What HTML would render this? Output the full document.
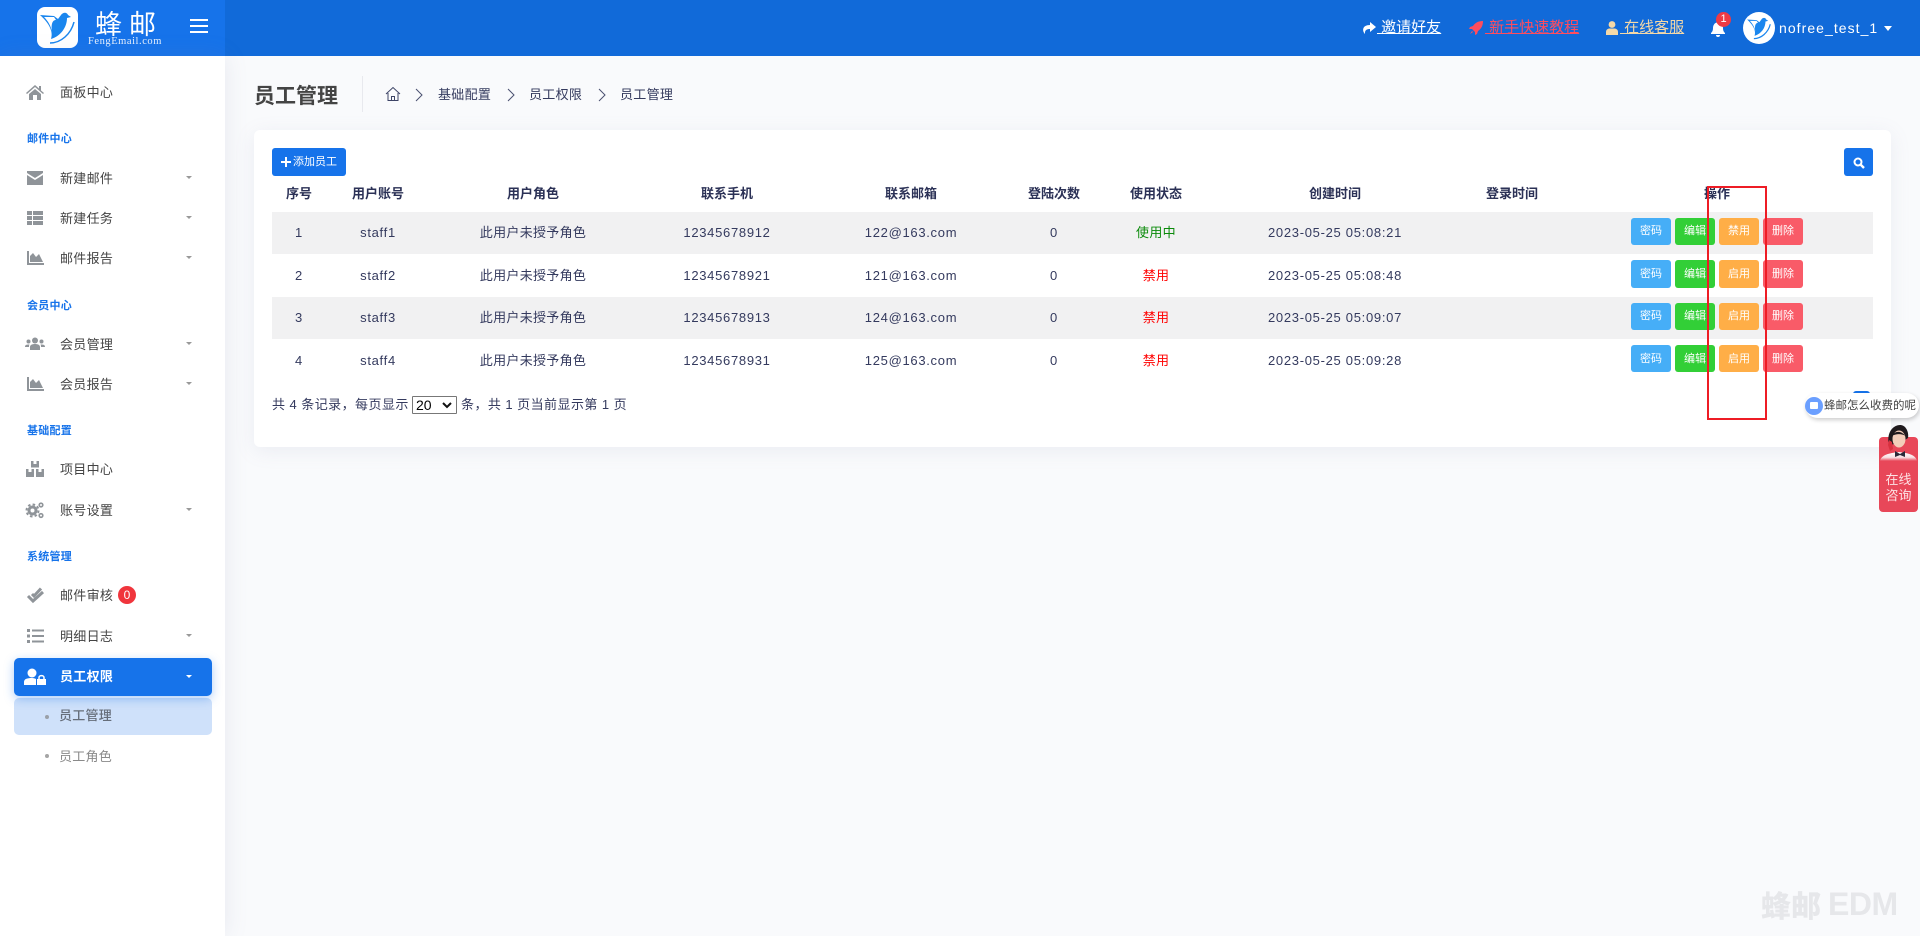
<!DOCTYPE html>
<html lang="zh-CN">
<head>
<meta charset="utf-8">
<title>员工管理</title>
<style>
*{box-sizing:border-box}
html,body{margin:0;padding:0;width:1920px;height:936px;overflow:hidden;background:#f9fafc;font-family:"Liberation Sans","Noto Sans CJK SC",sans-serif;color:#343a5e;font-size:13px}
.a{position:absolute;white-space:nowrap}
#hd{left:0;top:0;width:1920px;height:56px;background:#116ad9}
#hl{left:0;top:0;width:225px;height:56px;background:#1673ea}
#sb{left:0;top:56px;width:225px;height:880px;background:#fff;box-shadow:0 0 22px rgba(120,130,160,.14)}
.it{left:60px;font-size:13px;color:#444;line-height:20px;height:20px;letter-spacing:.3px}
.sec{left:27px;font-size:11px;font-weight:700;color:#1673ea;line-height:16px;letter-spacing:.25px}
.ic{left:25px;width:20px;height:20px;fill:#8f9499}
.car{left:186px;width:0;height:0;border-left:3.5px solid transparent;border-right:3.5px solid transparent;border-top:3.5px solid #999}
#card{left:254px;top:130px;width:1637px;height:317px;background:#fff;border-radius:6px;box-shadow:0 4px 20px rgba(130,140,170,.12)}
.row{left:272px;width:1601px;line-height:42px;font-size:13px}
.row.g{background:#f1f1f2}
.c{position:absolute;top:0;transform:translateX(-50%);white-space:nowrap;letter-spacing:.7px}
.z{letter-spacing:.3px}
.th{top:184px;line-height:20px;font-weight:700;font-size:13px;color:#2b3156;transform:translateX(-50%)}
.b{position:absolute;top:6px;width:40px;height:27px;line-height:27px;text-align:center;color:#fff;font-size:11px;border-radius:3px}
.t .b{line-height:29px}
.b1{left:1359px;background:#46aef7}.b2{left:1403px;background:#32cf37}.b3{left:1447px;background:#ffae47}.b4{left:1491px;background:#f95b68}
.tl{color:#fff;text-decoration:underline;font-size:15px;line-height:20px;top:18px;white-space:pre}
</style>
</head>
<body>
<div class="a" id="hd"></div>
<div class="a" id="hl"></div>

<!-- logo -->
<div class="a" style="left:37px;top:7px;width:41px;height:41px;background:#fff;border-radius:8px"></div>
<svg class="a" style="left:37px;top:7px" width="41" height="41" viewBox="0 0 41 41">
<path fill="#1a86ee" d="M3 8 L17 9 L21 12 L24 8 C26 5 30 5 31 8 L34 10 L30 11 C30 20 24 29 14 32 C16 26 14 18 3 8Z"/>
<path fill="#fff" d="M7 10 H17 L19 13 C15 13 14 18 15 25 C14 19 11 14 7 10Z"/>
<path fill="none" stroke="#1a86ee" stroke-width="1.500" d="M37 15 C34 27 24 36 13 36"/>
</svg>
<div class="a" style="left:95px;top:6px;font-size:27px;line-height:34px;color:#fff;letter-spacing:7px;font-family:'Noto Sans CJK SC',sans-serif;font-weight:400">蜂邮</div>
<div class="a" style="left:88px;top:35px;font-size:10.5px;line-height:14px;color:#e8f1fd;font-family:'Liberation Serif',serif;letter-spacing:.55px">FengEmail.com</div>
<div class="a" style="left:190px;top:19px;width:18px;height:2px;background:#fff"></div>
<div class="a" style="left:190px;top:25px;width:18px;height:2px;background:#fff"></div>
<div class="a" style="left:190px;top:31px;width:18px;height:2px;background:#fff"></div>

<!-- top right -->
<svg class="a" style="left:1362px;top:21px" width="14" height="14" viewBox="0 0 14 14"><path fill="#fff" d="M8 1 L14 6 L8 11 V8 C5 8 2.500 9 3 13 C0 10 0 4 8 4Z"/></svg>
<div class="a tl" style="left:1377px"> 邀请好友</div>
<svg class="a" style="left:1469px;top:20px" width="15" height="15" viewBox="0 0 15 15"><path fill="#ff4d5e" d="M14 1 C9 1 6 3 4 6 L1 7 L0 9 L3 9 L6 12 L6 15 L8 14 L9 11 C12 9 14 6 14 1Z"/><path fill="#ff4d5e" d="M3 11 L4 12 L1 14Z"/></svg>
<div class="a tl" style="left:1485px;color:#ff4d5e"> 新手快速教程</div>
<svg class="a" style="left:1606px;top:21px" width="12" height="14" viewBox="0 0 12 14"><circle cx="6" cy="3.500" r="3.400" fill="#f5d9a8"/><path fill="#f5d9a8" d="M0 14 V11 C0 8.500 2 7.500 3.500 7.500 H8.500 C10 7.500 12 8.500 12 11 V14Z"/></svg>
<div class="a tl" style="left:1620px;color:#f5d9a8"> 在线客服</div>
<svg class="a" style="left:1711px;top:21px" width="14" height="16" viewBox="0 0 14 16"><path fill="#fff" d="M7 0 C8 0 8 1 8 1.500 C11 2 12 5 12 7 C12 10 13 11 14 12 V13 H0 V12 C1 11 2 10 2 7 C2 5 3 2 6 1.500 C6 1 6 0 7 0Z M5 14 H9 C9 15.500 8 16 7 16 C6 16 5 15.500 5 14Z"/></svg>
<div class="a" style="left:1716px;top:12px;width:15px;height:15px;border-radius:50%;background:#ee3a45;color:#fff;font-size:11px;line-height:15px;text-align:center">1</div>
<div class="a" style="left:1743px;top:12px;width:32px;height:32px;border-radius:50%;background:#fff"></div>
<svg class="a" style="left:1745px;top:14px" width="28" height="28" viewBox="0 0 41 41">
<path fill="#1a86ee" d="M3 8 L17 9 L21 12 L24 8 C26 5 30 5 31 8 L34 10 L30 11 C30 20 24 29 14 32 C16 26 14 18 3 8Z"/>
<path fill="#fff" d="M7 10 H17 L19 13 C15 13 14 18 15 25 C14 19 11 14 7 10Z"/>
<path fill="none" stroke="#1a86ee" stroke-width="1.800" d="M37 15 C34 27 24 36 13 36"/>
</svg>
<div class="a" style="left:1779px;top:18px;font-size:14px;line-height:20px;color:#fff;letter-spacing:1.05px">nofree_test_1</div>
<div class="a" style="left:1884px;top:26px;width:0;height:0;border-left:4px solid transparent;border-right:4px solid transparent;border-top:5px solid #fff"></div>

<!-- sidebar -->
<div class="a" id="sb"></div>

<svg class="a ic" style="top:82px" viewBox="0 0 20 20"><path d="M10 3 L1 11 L2 12 L10 5 L18 12 L19 11 L16 8.500 V4 H14 V6.500Z M4 12 L10 7 L16 12 V18 H12 V13 H8 V18 H4Z"/></svg>
<div class="a it" style="top:83px">面板中心</div>
<div class="a sec" style="top:131px">邮件中心</div>

<svg class="a ic" style="top:168px" viewBox="0 0 20 20"><path d="M2 3 H18 V5 L10 10 L2 5Z M2 7 L10 12 L18 7 V17 H2Z"/></svg>
<div class="a it" style="top:169px">新建邮件</div><div class="a car" style="top:176px"></div>

<svg class="a ic" style="top:208px" viewBox="0 0 20 20"><path d="M2 3 H7 V7 H2Z M8 3 H18 V7 H8Z M2 8 H7 V12 H2Z M8 8 H18 V12 H8Z M2 13 H7 V17 H2Z M8 13 H18 V17 H8Z"/></svg>
<div class="a it" style="top:209px">新建任务</div><div class="a car" style="top:216px"></div>

<svg class="a ic" style="top:248px" viewBox="0 0 20 20"><path d="M2 3 H4 V15 H19 V17 H2Z M5 14 V8 L8 5 L11 9 L14 6 L18 14Z"/></svg>
<div class="a it" style="top:249px">邮件报告</div><div class="a car" style="top:256px"></div>

<div class="a sec" style="top:298px">会员中心</div>

<svg class="a ic" style="top:334px" viewBox="0 0 20 20"><circle cx="10" cy="6.500" r="3"/><circle cx="3.500" cy="7.500" r="2"/><circle cx="16.500" cy="7.500" r="2"/><path d="M5 16 V13 C5 11 7 10 10 10 C13 10 15 11 15 13 V16Z M0 13 C0 11 1 10.500 4.500 10.500 C4 11 4 12 4 13Z M20 13 C20 11 19 10.500 15.500 10.500 C16 11 16 12 16 13Z"/></svg>
<div class="a it" style="top:335px">会员管理</div><div class="a car" style="top:342px"></div>

<svg class="a ic" style="top:374px" viewBox="0 0 20 20"><path d="M2 3 H4 V15 H19 V17 H2Z M5 14 V8 L8 5 L11 9 L14 6 L18 14Z"/></svg>
<div class="a it" style="top:375px">会员报告</div><div class="a car" style="top:382px"></div>

<div class="a sec" style="top:423px">基础配置</div>

<svg class="a ic" style="top:459px" viewBox="0 0 20 20"><path d="M6 2 H8.500 V5 H11.500 V2 H14 V8.500 H6Z M1 10 H3.500 V13 H6.500 V10 H9 V18 H1Z M11 10 H13.500 V13 H16.500 V10 H19 V18 H11Z"/></svg>
<div class="a it" style="top:460px">项目中心</div>

<svg class="a" style="left:25px;top:500px" width="20" height="20" viewBox="0 0 20 20" fill="none" stroke="#8f9499"><circle cx="7.500" cy="10.500" r="3.500" stroke-width="3"/><circle cx="7.500" cy="10.500" r="6" stroke-width="2" stroke-dasharray="2.500 2.200"/><circle cx="16" cy="5" r="1.800" stroke-width="1.600"/><circle cx="16" cy="15.500" r="1.800" stroke-width="1.600"/></svg>
<div class="a it" style="top:501px">账号设置</div><div class="a car" style="top:508px"></div>

<div class="a sec" style="top:549px">系统管理</div>

<svg class="a" style="left:25px;top:585px" width="20" height="20" viewBox="0 0 20 20" fill="none" stroke="#8f9499" stroke-width="3"><path d="M3 11 L8 16 L18 7"/><path d="M7 9 L9 11 L16 3.500"/></svg>
<div class="a it" style="top:586px">邮件审核</div>
<div class="a" style="left:118px;top:586px;width:18px;height:18px;border-radius:50%;background:#f0353c;color:#fff;font-size:12px;line-height:18px;text-align:center">0</div>

<svg class="a ic" style="top:626px" viewBox="0 0 20 20"><path d="M2 3 H5 V6 H2Z M7 3.500 H19 V5.500 H7Z M2 8.500 H5 V11.500 H2Z M7 9 H19 V11 H7Z M2 14 H5 V17 H2Z M7 14.500 H19 V16.500 H7Z"/></svg>
<div class="a it" style="top:627px">明细日志</div><div class="a car" style="top:634px"></div>

<div class="a" style="left:14px;top:698px;width:198px;height:37px;background:#cfe1fa;border-radius:5px"></div>
<div class="a" style="left:14px;top:658px;width:198px;height:38px;background:#1673ea;border-radius:5px;box-shadow:0 3px 10px rgba(22,115,234,.35)"></div>
<svg class="a" style="left:24px;top:668px" width="22" height="18" viewBox="0 0 22 18"><circle cx="8" cy="5" r="4.500" fill="#fff"/><path fill="#fff" d="M0 17 V14 C0 11 3 10 8 10 C10 10 11 10.500 12 11 V17Z"/><path fill="#fff" d="M13 11 H22 V17 H13Z"/><path fill="none" stroke="#fff" stroke-width="1.500" d="M15 11 V9.500 C15 7 20 7 20 9.500 V11"/></svg>
<div class="a it" style="top:667px;color:#fff;font-weight:700">员工权限</div>
<div class="a car" style="top:675px;border-top-color:#fff"></div>

<div class="a" style="left:45px;top:715px;width:4px;height:4px;border-radius:50%;background:#9aa0a8"></div>
<div class="a" style="left:59px;top:706px;font-size:13px;line-height:20px;color:#666e7a;letter-spacing:.25px;font-weight:500">员工管理</div>
<div class="a" style="left:45px;top:754px;width:4px;height:4px;border-radius:50%;background:#a5a5a5"></div>
<div class="a" style="left:59px;top:747px;font-size:13px;line-height:20px;color:#8a8a8a;letter-spacing:.25px">员工角色</div>

<!-- page title -->
<div class="a" style="left:254px;top:81px;font-size:21px;line-height:32px;font-weight:700;color:#444">员工管理</div>
<div class="a" style="left:362px;top:76px;width:1px;height:36px;background:#e8e9ee"></div>
<svg class="a" style="left:385px;top:86px" width="16" height="16" viewBox="0 0 16 16" fill="none" stroke="#3d4466" stroke-width="1"><path d="M1 8 L8 1.500 L15 8"/><path d="M3 7 V14.500 H13 V7"/><path d="M6.500 14.500 V10.500 H9.500 V14.500"/></svg>
<svg class="a" style="left:415px;top:88px" width="8" height="14" viewBox="0 0 8 14" fill="none" stroke="#4a5070" stroke-width="1"><path d="M1 1 L7 7 L1 13"/></svg>
<div class="a" style="left:438px;top:85px;font-size:13px;line-height:20px;letter-spacing:.3px">基础配置</div>
<svg class="a" style="left:507px;top:88px" width="8" height="14" viewBox="0 0 8 14" fill="none" stroke="#4a5070" stroke-width="1"><path d="M1 1 L7 7 L1 13"/></svg>
<div class="a" style="left:529px;top:85px;font-size:13px;line-height:20px;letter-spacing:.3px">员工权限</div>
<svg class="a" style="left:598px;top:88px" width="8" height="14" viewBox="0 0 8 14" fill="none" stroke="#4a5070" stroke-width="1"><path d="M1 1 L7 7 L1 13"/></svg>
<div class="a" style="left:620px;top:85px;font-size:13px;line-height:20px;letter-spacing:.3px">员工管理</div>

<!-- card -->
<div class="a" id="card"></div>
<div class="a" style="left:272px;top:148px;width:74px;height:28px;background:#1673ea;border-radius:3px"></div>
<svg class="a" style="left:281px;top:157px" width="10" height="10" viewBox="0 0 10 10"><path fill="#fff" d="M4 0 H6 V4 H10 V6 H6 V10 H4 V6 H0 V4 H4Z"/></svg>
<div class="a" style="left:293px;top:153px;font-size:11px;line-height:18px;color:#fff">添加员工</div>
<div class="a" style="left:1844px;top:148px;width:29px;height:28px;background:#1673ea;border-radius:3px"></div>
<svg class="a" style="left:1853px;top:157px" width="12" height="12" viewBox="0 0 12 12" fill="none" stroke="#fff" stroke-width="2"><circle cx="5" cy="5" r="3.500"/><path d="M7.500 7.500 L11 11" stroke-width="2.400"/></svg>

<!-- table header -->
<div class="a th" style="left:299px">序号</div>
<div class="a th" style="left:378px">用户账号</div>
<div class="a th" style="left:533px">用户角色</div>
<div class="a th" style="left:727px">联系手机</div>
<div class="a th" style="left:911px">联系邮箱</div>
<div class="a th" style="left:1054px">登陆次数</div>
<div class="a th" style="left:1156px">使用状态</div>
<div class="a th" style="left:1335px">创建时间</div>
<div class="a th" style="left:1512px">登录时间</div>
<div class="a th" style="left:1717px">操作</div>

<!-- rows -->
<div class="a row g" style="top:212px;height:42px">
<span class="c" style="left:27px">1</span><span class="c" style="left:106px">staff1</span><span class="c z" style="left:261px">此用户未授予角色</span><span class="c" style="left:455px">12345678912</span><span class="c" style="left:639px">122@163.com</span><span class="c" style="left:782px">0</span><span class="c z" style="left:884px;color:#0a8a0a">使用中</span><span class="c" style="left:1063px">2023-05-25 05:08:21</span>
<span class="b b1">密码</span><span class="b b2">编辑</span><span class="b b3">禁用</span><span class="b b4">删除</span>
</div>
<div class="a row t" style="top:254px;height:43px;line-height:43px">
<span class="c" style="left:27px">2</span><span class="c" style="left:106px">staff2</span><span class="c z" style="left:261px">此用户未授予角色</span><span class="c" style="left:455px">12345678921</span><span class="c" style="left:639px">121@163.com</span><span class="c" style="left:782px">0</span><span class="c z" style="left:884px;color:#f00">禁用</span><span class="c" style="left:1063px">2023-05-25 05:08:48</span>
<span class="b b1" style="height:28px">密码</span><span class="b b2" style="height:28px">编辑</span><span class="b b3" style="height:28px">启用</span><span class="b b4" style="height:28px">删除</span>
</div>
<div class="a row g" style="top:297px;height:42px">
<span class="c" style="left:27px">3</span><span class="c" style="left:106px">staff3</span><span class="c z" style="left:261px">此用户未授予角色</span><span class="c" style="left:455px">12345678913</span><span class="c" style="left:639px">124@163.com</span><span class="c" style="left:782px">0</span><span class="c z" style="left:884px;color:#f00">禁用</span><span class="c" style="left:1063px">2023-05-25 05:09:07</span>
<span class="b b1">密码</span><span class="b b2">编辑</span><span class="b b3">启用</span><span class="b b4">删除</span>
</div>
<div class="a row t" style="top:339px;height:43px;line-height:43px">
<span class="c" style="left:27px">4</span><span class="c" style="left:106px">staff4</span><span class="c z" style="left:261px">此用户未授予角色</span><span class="c" style="left:455px">12345678931</span><span class="c" style="left:639px">125@163.com</span><span class="c" style="left:782px">0</span><span class="c z" style="left:884px;color:#f00">禁用</span><span class="c" style="left:1063px">2023-05-25 05:09:28</span>
<span class="b b1">密码</span><span class="b b2">编辑</span><span class="b b3">启用</span><span class="b b4">删除</span>
</div>

<!-- pager -->
<div class="a" style="left:272px;top:395px;font-size:13px;line-height:20px;letter-spacing:.45px">共 4 条记录，每页显示</div>
<div class="a" style="left:412px;top:396px;width:45px;height:18px;border:1px solid #777;background:#fff;border-radius:1px"></div>
<div class="a" style="left:416px;top:396px;font-size:14px;line-height:18px;color:#000">20</div>
<svg class="a" style="left:442px;top:402px" width="10" height="7" viewBox="0 0 10 7" fill="none" stroke="#111" stroke-width="2"><path d="M1 1 L5 5 L9 1"/></svg>
<div class="a" style="left:461px;top:395px;font-size:13px;line-height:20px;letter-spacing:.45px">条，共 1 页当前显示第 1 页</div>

<!-- red annotation -->
<div class="a" style="left:1707px;top:186px;width:60px;height:234px;border:2px solid #ee1c25"></div>

<!-- floating -->
<div class="a" style="left:1853px;top:391px;width:17px;height:6px;background:#1673ea;border-radius:3px 3px 0 0"></div>
<div class="a" style="left:1805px;top:393px;width:114px;height:25px;background:#fff;border-radius:13px;box-shadow:1px 2px 4px rgba(0,0,0,.2)"></div>
<div class="a" style="left:1805px;top:397px;width:18px;height:18px;border-radius:50%;background:#6b9fff"></div>
<div class="a" style="left:1810px;top:402px;width:8px;height:7px;background:#fff;border-radius:1px"></div>
<div class="a" style="left:1824px;top:397px;font-size:11.5px;line-height:18px;color:#444">蜂邮怎么收费的呢</div>

<div class="a" style="left:1879px;top:437px;width:39px;height:75px;background:#e84759;border-radius:4px"></div>
<svg class="a" style="left:1879px;top:424px" width="39" height="38" viewBox="0 0 39 38">
<defs><linearGradient id="sh" x1="0" y1="0" x2="0" y2="1"><stop offset="0" stop-color="#fff"/><stop offset="0.6" stop-color="#f8dfe3"/><stop offset="1" stop-color="#e84759"/></linearGradient></defs>
<path fill="url(#sh)" d="M1 37 C2 31 10 29 20 28 C29 29 37 31 38 37Z"/>
<path fill="#1f1a1d" d="M10 21 C7 9 14 1 21 1 C27 1 30 8 29 14 L26 16 L12 21Z"/>
<ellipse cx="20" cy="15" rx="6.500" ry="8.500" fill="#f3cdb9"/>
<path fill="#1f1a1d" d="M13 12 C15 7 22 6 26.500 12 C23 9.500 17 9.500 13 12Z"/>
<path fill="#2a2a3a" d="M16 27 L21 30 L26 27 V33 L21 31 L16 33Z"/>
<path fill="#d8313f" d="M10 16 L13 18 L14 25 L11 27 L9 21Z"/>
</svg>
<div class="a" style="left:1879px;top:472px;width:39px;text-align:center;font-size:13px;line-height:16px;color:#fde2e5">在线<br>咨询</div>

<!-- watermark -->
<div class="a" style="left:1761px;top:886px;font-size:30px;line-height:36px;font-weight:900;color:#e6e7ea;font-family:'Noto Sans CJK SC',sans-serif;letter-spacing:0">蜂邮</div>
<div class="a" style="left:1828px;top:886px;font-size:32px;line-height:36px;font-weight:700;color:#e6e7ea;font-family:'Liberation Sans',sans-serif;letter-spacing:-.5px">EDM</div>
</body>
</html>
